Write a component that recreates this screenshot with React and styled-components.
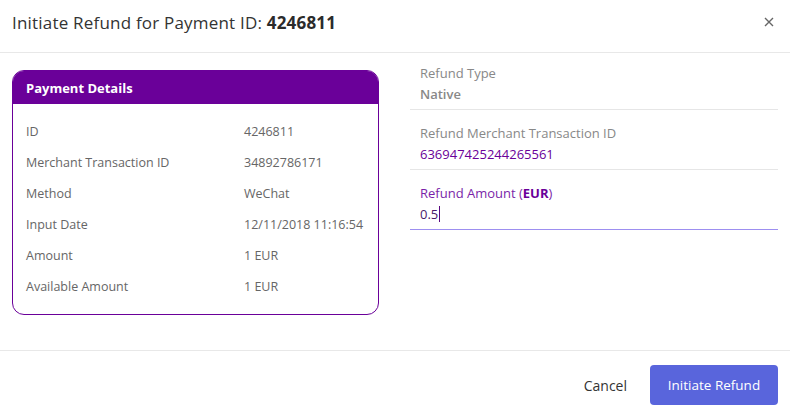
import styled, { createGlobalStyle } from "styled-components";

const GlobalStyle = createGlobalStyle`
  html, body {
    margin: 0;
    padding: 0;
    background: #ffffff;
  }
  body {
    font-family: "Open Sans", "Noto Sans", sans-serif;
    color: #333;
  }
`;

const Modal = styled.div`
  width: 790px;
  height: 419px;
  display: flex;
  flex-direction: column;
  background: #fff;
`;

const Header = styled.div`
  display: flex;
  align-items: center;
  justify-content: space-between;
  height: 53px;
  padding: 0 12px 0 12px;
  border-bottom: 1px solid #e8e8e8;
  box-sizing: border-box;
`;

const Title = styled.h2`
  margin: 0 0 8px;
  font-size: 17px;
  font-weight: 400;
  color: #333;
  letter-spacing: 0.2px;

  b {
    font-weight: 700;
    color: #2b2b2b;
  }
`;

const Close = styled.button`
  background: transparent;
  border: none;
  padding: 0;
  margin: 0 2px 8px 0;
  width: 14px;
  height: 14px;
  display: flex;
  align-items: center;
  justify-content: center;
  cursor: pointer;
`;

const Body = styled.div`
  display: grid;
  grid-template-columns: 367px 368px;
  column-gap: 31px;
  align-items: start;
  padding: 11px 12px 0;
  height: 298px;
  box-sizing: border-box;
  border-bottom: 1px solid #e8e8e8;
`;

const Card = styled.div`
  margin-top: 6px;
  border: 1px solid #6a0099;
  border-radius: 12px;
  overflow: hidden;
  height: 245px;
  box-sizing: border-box;
`;

const CardHeader = styled.div`
  background: #6a0099;
  color: #fff;
  height: 33px;
  display: flex;
  align-items: center;
  padding-left: 13px;
  font-size: 13px;
  font-weight: 700;
`;

const DetailList = styled.div`
  display: flex;
  flex-direction: column;
  padding: 12px 0 0 13px;
`;

const DetailRow = styled.div`
  display: grid;
  grid-template-columns: 218px 1fr;
  height: 31px;
  align-items: center;
  font-size: 12.5px;
  color: #666;
`;

const Fields = styled.div`
  display: flex;
  flex-direction: column;
`;

const Field = styled.div`
  display: flex;
  flex-direction: column;
  padding: ${(p) => (p.$first ? "0" : "14px")} 10px 0;
  height: ${(p) => (p.$first ? "46px" : "60px")};
  box-sizing: border-box;
  border-bottom: 1px solid ${(p) => (p.$active ? "#9d8ff0" : "#e6e6e6")};
`;

const FieldLabel = styled.div`
  font-size: 13px;
  color: ${(p) => (p.$active ? "#7a1fa8" : "#888")};
  line-height: 18px;

  b {
    font-weight: 700;
    color: #6a0099;
  }
`;

const FieldValue = styled.div`
  font-size: 13px;
  line-height: 20px;
  margin-top: 2px;
  font-weight: ${(p) => (p.$bold ? 600 : 400)};
  color: ${(p) => p.$color || "#888"};
  display: flex;
  align-items: center;
`;

const Caret = styled.span`
  display: inline-block;
  width: 1px;
  height: 16px;
  background: #5a0a80;
  margin-left: 1px;
`;

const Footer = styled.div`
  flex: 1;
  display: flex;
  align-items: center;
  justify-content: flex-end;
  gap: 23px;
  padding: 0 12px 0 0;
`;

const CancelButton = styled.button`
  background: transparent;
  border: none;
  font-family: inherit;
  font-size: 14px;
  color: #333;
  padding: 0;
  cursor: pointer;
`;

const PrimaryButton = styled.button`
  background: #5965dc;
  border: none;
  border-radius: 4px;
  color: #fff;
  font-family: inherit;
  font-size: 13.5px;
  font-weight: 500;
  width: 128px;
  height: 40px;
  cursor: pointer;
`;

const details = [
  ["ID", "4246811"],
  ["Merchant Transaction ID", "34892786171"],
  ["Method", "WeChat"],
  ["Input Date", "12/11/2018 11:16:54"],
  ["Amount", "1 EUR"],
  ["Available Amount", "1 EUR"],
];

export default function App() {
  return (
    <>
      <GlobalStyle />
      <Modal>
        <Header>
          <Title>
            Initiate Refund for Payment ID: <b>4246811</b>
          </Title>
          <Close type="button" aria-label="close">
            <svg width="10" height="10" viewBox="0 0 10 10">
              <path d="M1 1L9 9M9 1L1 9" stroke="#666" strokeWidth="1.4" />
            </svg>
          </Close>
        </Header>
        <Body>
          <Card>
            <CardHeader>Payment Details</CardHeader>
            <DetailList>
              {details.map(([label, value]) => (
                <DetailRow key={label}>
                  <span>{label}</span>
                  <span>{value}</span>
                </DetailRow>
              ))}
            </DetailList>
          </Card>
          <Fields>
            <Field $first>
              <FieldLabel>Refund Type</FieldLabel>
              <FieldValue $bold>Native</FieldValue>
            </Field>
            <Field>
              <FieldLabel>Refund Merchant Transaction ID</FieldLabel>
              <FieldValue $color="#6a0099">636947425244265561</FieldValue>
            </Field>
            <Field $active>
              <FieldLabel $active>
                Refund Amount (<b>EUR</b>)
              </FieldLabel>
              <FieldValue $color="#4a1a6a">
                0.5
                <Caret />
              </FieldValue>
            </Field>
          </Fields>
        </Body>
        <Footer>
          <CancelButton type="button">Cancel</CancelButton>
          <PrimaryButton type="button">Initiate Refund</PrimaryButton>
        </Footer>
      </Modal>
    </>
  );
}
